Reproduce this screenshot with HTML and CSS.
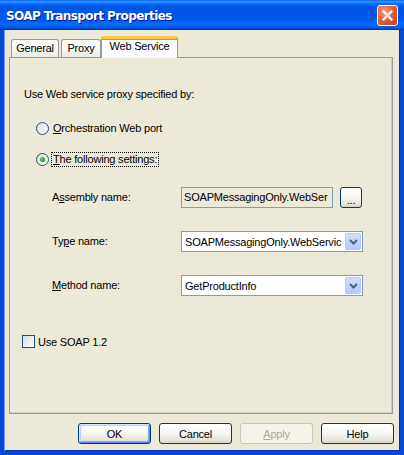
FILE: index.html
```html
<!DOCTYPE html>
<html lang="en">
<head>
    <meta charset="UTF-8">
    <title>SOAP Transport Properties</title>
    <link rel="stylesheet" href="styles.css">
</head>
<body>
    <div class="window">
        <div class="titlebar">
            <span class="title">SOAP Transport Properties</span>
            <button class="close-btn" title="Close">
                <svg width="11" height="11" viewBox="0 0 11 11">
                    <path d="M1.5 1.5 L9.5 9.5 M9.5 1.5 L1.5 9.5" stroke="#fff" stroke-width="2.2" stroke-linecap="square"/>
                </svg>
            </button>
        </div>

        <div class="client">
            <div class="tabs">
                <div class="tab tab-general">General</div>
                <div class="tab tab-proxy">Proxy</div>
                <div class="tab tab-web active">Web Service</div>
            </div>

            <div class="panel">
                <p class="intro">Use Web service proxy specified by:</p>

                <div class="radios">
                    <label class="radio">
                        <span class="radio-dot"></span>
                        <span class="radio-text"><u>O</u>rchestration Web port</span>
                    </label>
                    <label class="radio checked">
                        <span class="radio-dot"></span>
                        <span class="radio-text focus"><u>T</u>he following settings:</span>
                    </label>
                </div>

                <div class="fields">
                    <span class="field-label">A<u>s</u>sembly name:</span>
                    <div class="field-row">
                        <div class="textbox readonly">SOAPMessagingOnly.WebSer</div>
                        <button class="btn browse">...</button>
                    </div>

                    <span class="field-label">Ty<u>p</u>e name:</span>
                    <div class="combo">
                        <span class="combo-text">SOAPMessagingOnly.WebServic</span>
                        <span class="combo-arrow">
                            <svg width="9" height="6" viewBox="0 0 9 6"><path d="M1 1 L4.5 4.5 L8 1" fill="none" stroke="#4d6185" stroke-width="2"/></svg>
                        </span>
                    </div>

                    <span class="field-label"><u>M</u>ethod name:</span>
                    <div class="combo">
                        <span class="combo-text">GetProductInfo</span>
                        <span class="combo-arrow">
                            <svg width="9" height="6" viewBox="0 0 9 6"><path d="M1 1 L4.5 4.5 L8 1" fill="none" stroke="#4d6185" stroke-width="2"/></svg>
                        </span>
                    </div>
                </div>

                <label class="check">
                    <span class="check-box"></span>
                    <span>Use SOAP 1.2</span>
                </label>
            </div>

            <div class="buttons">
                <button class="btn default">OK</button>
                <button class="btn">Cancel</button>
                <button class="btn" disabled><u>A</u>pply</button>
                <button class="btn">Help</button>
            </div>
        </div>
    </div>
</body>
</html>
```

FILE: styles.css
```css
* {
    box-sizing: border-box;
}

body {
    margin: 0;
    font-family: 'Liberation Sans', Arial, sans-serif;
    font-size: 11px;
    letter-spacing: -0.2px;
    color: #000;
    background: #ece9d8;
}

u {
    text-decoration: underline;
    text-underline-offset: 1px;
}

.window {
    width: 404px;
    height: 455px;
    display: flex;
    flex-direction: column;
}

/* Luna title bar */
.titlebar {
    height: 30px;
    flex: none;
    display: flex;
    align-items: center;
    justify-content: space-between;
    padding: 0 6px 0 6px;
    background: linear-gradient(to bottom,
        #0058ee 0%, #3593ff 4%, #288eff 7%, #127dff 10%, #036ffc 13%,
        #0262ee 17%, #0057e5 23%, #0054e3 30%, #0055eb 56%, #005bf5 68%,
        #026afe 78%, #0062ef 88%, #0052d6 94%, #0040ab 97%, #003092 100%);
}

.title {
    color: #fff;
    font-family: 'DejaVu Sans', sans-serif;
    font-weight: bold;
    font-size: 12px;
    letter-spacing: -0.6px;
    text-shadow: 1px 1px #0a1883;
    margin-top: 1px;
}

.close-btn {
    width: 21px;
    height: 21px;
    padding: 0;
    border: 1px solid #fff;
    border-radius: 3px;
    background: radial-gradient(circle at 35% 30%, #f2a287 0%, #e2613f 45%, #c53d1c 100%);
    display: flex;
    align-items: center;
    justify-content: center;
    margin-top: 1px;
}

/* window frame and dialog area */
.client {
    flex: 1;
    display: flex;
    flex-direction: column;
    padding: 6px 6px 0 5px;
    border-left: 4px solid #0a47d9;
    border-right: 4px solid #0a47d9;
    border-bottom: 4px solid #0a47d9;
    box-shadow: inset 1px 0 #6f9cf0, inset -1px 0 #0034b8, inset 0 -1px #0034b8;
}

/* tab strip */
.tabs {
    height: 21px;
    display: flex;
    align-items: flex-end;
    margin-left: 2px;
    position: relative;
    z-index: 1;
}

.tab {
    height: 18px;
    border: 1px solid #919b9c;
    border-bottom: none;
    border-radius: 3px 3px 0 0;
    background: linear-gradient(to bottom, #ffffff, #f7f7f4 50%, #ecebe5);
    text-align: center;
    line-height: 17px;
}

.tab-general {
    width: 48px;
    margin-right: 2px;
}

.tab-proxy {
    width: 40px;
}

.tab-web {
    width: 77px;
}

.tab.active {
    height: 22px;
    margin-bottom: -1px;
    background: #fcfcfe;
    border-top: 3px solid #ffc83c;
    box-shadow: inset 0 1px #e68b2c;
    line-height: 15px;
}

.panel {
    height: 357px;
    margin-right: 1px;
    border: 1px solid #919b9c;
    background: #ece9d8;
    padding: 29px 0 0 12px;
    box-shadow: inset -1px -1px #d0cec0;
}

.intro {
    margin: 0 0 0 2px;
    line-height: 14px;
}

/* option buttons */
.radios {
    margin: 20px 0 0 14px;
    display: flex;
    flex-direction: column;
    gap: 16px;
}

.radio {
    height: 15px;
    display: flex;
    align-items: center;
    gap: 3px;
}

.radio-dot {
    width: 13px;
    height: 13px;
    border: 1px solid #1c5180;
    border-radius: 50%;
    background: linear-gradient(135deg, #dcdcd7, #ffffff);
    display: flex;
    align-items: center;
    justify-content: center;
}

.radio.checked .radio-dot::after {
    content: "";
    width: 5px;
    height: 5px;
    border-radius: 50%;
    background: radial-gradient(circle at 40% 35%, #55d155, #21a121 70%);
}

.radio-text {
    line-height: 13px;
    padding: 0 1px;
    border: 1px dotted transparent;
    margin-left: -1px;
}

.radio-text.focus {
    border-color: #000;
}

/* assembly / type / method rows */
.fields {
    margin: 20px 0 0 30px;
    display: grid;
    grid-template-columns: 129px 182px;
    row-gap: 23px;
    align-items: center;
}

.field-label {
    line-height: 13px;
}

.field-row {
    display: flex;
    align-items: center;
    gap: 7px;
}

.textbox {
    width: 152px;
    height: 21px;
    border: 1px solid #7f9db9;
    padding: 0 2px;
    line-height: 19px;
    white-space: nowrap;
    overflow: hidden;
}

.textbox.readonly {
    background: #ece9d8;
}

.combo {
    width: 182px;
    height: 21px;
    border: 1px solid #7f9db9;
    background: #fff;
    padding: 1px;
    display: flex;
    align-items: center;
}

.combo-text {
    flex: 1;
    padding-left: 2px;
    white-space: nowrap;
    overflow: hidden;
}

.combo-arrow {
    width: 16px;
    height: 17px;
    border: 1px solid #b9cbf3;
    border-radius: 2px;
    background: linear-gradient(to bottom, #d2defb, #b5c9f6);
    display: flex;
    align-items: center;
    justify-content: center;
}

.check {
    margin-top: 39px;
    height: 13px;
    display: flex;
    align-items: center;
    gap: 3px;
}

.check-box {
    width: 13px;
    height: 13px;
    border: 1px solid #1c5180;
    background: linear-gradient(135deg, #dcdcd7, #ffffff);
}

/* push buttons */
.buttons {
    margin-top: 9px;
    display: flex;
    justify-content: flex-end;
    gap: 8px;
}

.btn {
    width: 73px;
    height: 21px;
    padding: 0;
    font-family: inherit;
    font-size: 11px;
    letter-spacing: inherit;
    color: #000;
    border: 1px solid #003c74;
    border-radius: 3px;
    background: linear-gradient(to bottom, #ffffff, #f4f4f0 55%, #e3e0d6 90%, #d6d0c5);
}

.btn.default {
    box-shadow: inset 1px 1px #cee7ff, inset -1px -1px #6982ee, inset 2px 2px #bcd4f6, inset -2px -2px #89adf1;
}

.btn:disabled {
    color: #aca899;
    border-color: #c9c7ba;
    background: #f5f4ea;
}

.btn.browse {
    width: 22px;
    height: 21px;
    line-height: 10px;
    padding-top: 4px;
}
```
